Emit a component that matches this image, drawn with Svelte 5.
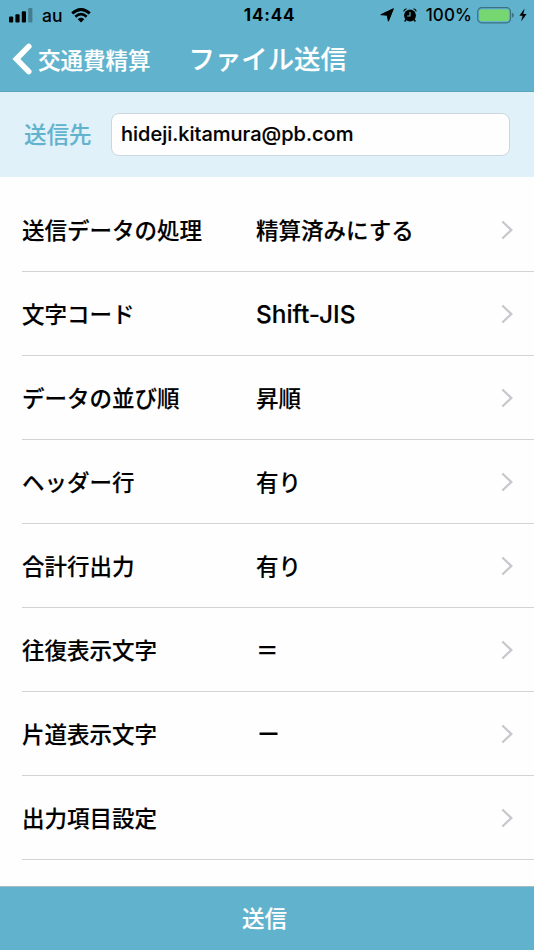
<script>
  const rows = [
    { label: '送信データの処理', value: '精算済みにする' },
    { label: '文字コード', value: 'Shift-JIS', kind: 'latin' },
    { label: 'データの並び順', value: '昇順' },
    { label: 'ヘッダー行', value: '有り' },
    { label: '合計行出力', value: '有り' },
    { label: '往復表示文字', value: '＝', kind: 'symbol' },
    { label: '片道表示文字', value: '－', kind: 'symbol dash' },
    { label: '出力項目設定', value: '' }
  ];
</script>

<div class="screen">
  <header>
    <div class="status">
      <div class="left">
        <svg class="signal" width="24" height="15" viewBox="0 0 24 15">
          <rect x="0" y="8.6" width="4.2" height="5.9" rx="1" />
          <rect x="6.4" y="6.2" width="4.2" height="8.3" rx="1" />
          <rect x="12.8" y="3.3" width="4.2" height="11.2" rx="1" />
          <rect x="19.2" y="0.1" width="4.2" height="14.4" rx="1" opacity="0.3" />
        </svg>
        <span class="carrier">au</span>
        <svg class="wifi" width="20" height="15" viewBox="0 0 20 15">
          <path d="M1.2 5.4Q10-2.5 18.8 5.4" fill="none" stroke="#000" stroke-width="2.8" />
          <path d="M4.3 8.7Q10 3.6 15.7 8.7" fill="none" stroke="#000" stroke-width="2.6" />
          <path d="M6.7 11.2Q10 8.3 13.3 11.2L10 14.6Z" />
        </svg>
      </div>
      <span class="time">14:44</span>
      <div class="right">
        <svg class="location" width="14" height="14" viewBox="0 0 14 14">
          <path d="M13.4 .7L8.4 13.2 7.2 7.2 .8 6.7Z" stroke="#000" stroke-width="1" stroke-linejoin="round" />
        </svg>
        <svg class="alarm" width="14" height="14" viewBox="0 0 14 14">
          <circle cx="7" cy="7.5" r="5.9" />
          <path d="M3 11.6L2 13M11 11.6l1 1.4" stroke="#000" stroke-width="1.5" stroke-linecap="round" />
          <path d="M.7 3.4Q1.2 1.2 3.6 .8M13.3 3.4Q12.8 1.2 10.4 .8" stroke="#000" stroke-width="1.1" fill="none" />
          <path d="M7 3.9V8H4.2" stroke="#61b3cd" stroke-width="1.1" fill="none" />
        </svg>
        <span class="percent">100%</span>
        <svg class="battery" width="38" height="17" viewBox="0 0 38 17">
          <rect x=".7" y=".7" width="32.8" height="15.1" rx="4" fill="none" stroke="#3c7083" stroke-width="1.2" />
          <rect x="2.4" y="2.4" width="29.4" height="11.7" rx="2" fill="#76d770" />
          <path d="M34.9 5.7Q36.9 6.1 36.9 8.2T34.9 10.7Z" fill="#3c7083" />
        </svg>
        <svg class="bolt" width="8" height="14" viewBox="0 0 8 14">
          <path d="M5.6.4L.4 7.7H3.6L2.1 13.4 7.6 5.9H4.3Z" />
        </svg>
      </div>
    </div>
    <nav>
      <button class="back">
        <svg width="20" height="32" viewBox="0 0 20 32">
          <path d="M16.8 3.4L4.4 16 16.8 28.6" fill="none" stroke="#fff" stroke-width="5.6" stroke-linecap="round" stroke-linejoin="miter" />
        </svg>
        <span>交通費精算</span>
      </button>
      <h1>ファイル送信</h1>
    </nav>
  </header>

  <section class="recipient">
    <label for="mail">送信先</label>
    <input id="mail" value="hideji.kitamura@pb.com" />
  </section>

  <main>
    {#each rows as row}
      <div class="row">
        <span class="label">{row.label}</span>
        <span class={['value', row.kind]}>{row.value}</span>
        <svg width="12" height="20" viewBox="0 0 12 20">
          <path d="M1.3 1.5L10.3 10 1.3 18.5" fill="none" stroke="#c7c7cc" stroke-width="2.2" />
        </svg>
      </div>
    {/each}
  </main>

  <footer><button>送信</button></footer>
</div>

<style>
  :global(body) { margin: 0; }
  * { box-sizing: border-box; }
  .screen {
    width: 534px;
    height: 950px;
    display: flex;
    flex-direction: column;
    overflow: hidden;
    background: #fefefe;
    color: #000;
    font-family: "Noto Sans CJK JP", sans-serif;
    font-weight: 500;
    font-size: 22.5px;
    -webkit-text-stroke-width: 0.15px;
  }
  svg { display: block; flex: none; }
  button {
    padding: 0;
    border: 0;
    background: none;
    color: #fff;
    font: inherit;
  }
  header {
    flex: none;
    height: 92px;
    background: #61b3cd;
    border-bottom: 1px solid #5aa5bd;
  }
  .status {
    height: 30px;
    display: grid;
    grid-template-columns: 1fr auto 1fr;
    align-items: center;
    padding: 0 7px 0 9px;
    font-family: Inter, sans-serif;
    font-size: 17px;
    -webkit-text-stroke-width: 0;
  }
  .left, .right { display: flex; align-items: center; }
  .right { justify-content: flex-end; }
  .carrier { margin-left: 9px; width: 20px; font-size: 17.5px; }
  .wifi { margin-left: 9px; }
  .time { padding-left: 3px; font-weight: 700; font-size: 17px; letter-spacing: 0.8px; }
  .alarm { margin-left: 9px; }
  .percent { margin-left: 9px; letter-spacing: 0.1px; }
  .battery { margin-left: 5px; }
  .bolt { margin-left: 4px; }
  nav { height: 58px; display: flex; align-items: center; color: #fff; }
  .back { display: flex; align-items: center; padding-left: 12px; }
  .back span { margin-left: 6px; }
  h1 {
    margin: 0 0 0 38px;
    padding-bottom: 3px;
    font-size: 26.4px;
    line-height: 36px;
    font-weight: 500;
  }
  .recipient {
    flex: none;
    height: 85px;
    display: flex;
    align-items: center;
    padding: 0 24px;
    background: #e1f1fa;
  }
  .recipient label { width: 87px; padding-bottom: 4px; color: #61b3cd; }
  input {
    flex: 1;
    min-width: 0;
    height: 43px;
    padding: 0 9px 1px;
    border: 1px solid #ccd6dc;
    border-radius: 8px;
    background: #fefefe;
    color: #000;
    font: 500 20px Inter, sans-serif;
    outline: none;
  }
  main { flex: 1; padding: 11px 0 0 22px; }
  .row {
    height: 84px;
    display: flex;
    align-items: center;
    border-bottom: 1px solid #d3d3d5;
    padding-right: 21px;
  }
  .label { width: 234px; padding-bottom: 2px; }
  .value { flex: 1; padding-bottom: 2px; }
  .latin { padding: 1px 0 0; font-family: Inter, sans-serif; font-size: 24.4px; }
  .symbol { font-weight: 700; }
  .dash { font-size: 25px; padding-bottom: 4px; }
  footer {
    flex: none;
    height: 64px;
    display: flex;
    justify-content: center;
    align-items: center;
    background: #61b3cd;
    border-top: 1px solid #a6bcc4;
  }
  footer button { padding: 0 5px 3px 0; }
</style>
